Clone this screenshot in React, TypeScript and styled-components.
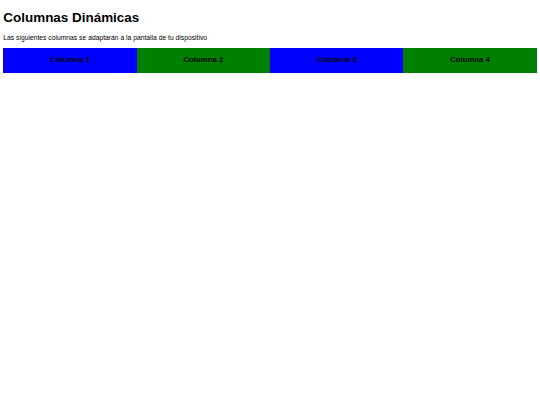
import React from "react";
import styled, { createGlobalStyle } from "styled-components";

const GlobalStyle = createGlobalStyle`
  body {
    margin: 3.33px;
    font-family: "Liberation Sans", Arial, sans-serif;
    background: #ffffff;
  }
`;

const Title = styled.h1`
  font-size: 13.45px;
  font-weight: bold;
  margin: 6.9px 0 8.9px;
`;

const Intro = styled.p`
  font-size: 6.75px;
  margin: 6.67px 0;
`;

const Row = styled.div`
  display: flex;
`;

const Column = styled.div<{ $bg: string }>`
  flex: 1;
  background: ${(p) => p.$bg};
  color: #000;
  font-weight: bold;
  font-size: 7.8px;
  text-align: center;
  padding: 8.33px 0;
  line-height: 8.33px;
`;

const columns = [
  { label: "Columna 1", bg: "#0000ff" },
  { label: "Columna 2", bg: "#008000" },
  { label: "Columna 3", bg: "#0000ff" },
  { label: "Columna 4", bg: "#008000" },
];

export default function App() {
  return (
    <>
      <GlobalStyle />
      <Title>Columnas Dinámicas</Title>
      <Intro>Las siguientes columnas se adaptarán a la pantalla de tu dispositivo</Intro>
      <Row>
        {columns.map((c) => (
          <Column key={c.label} $bg={c.bg}>
            {c.label}
          </Column>
        ))}
      </Row>
    </>
  );
}
